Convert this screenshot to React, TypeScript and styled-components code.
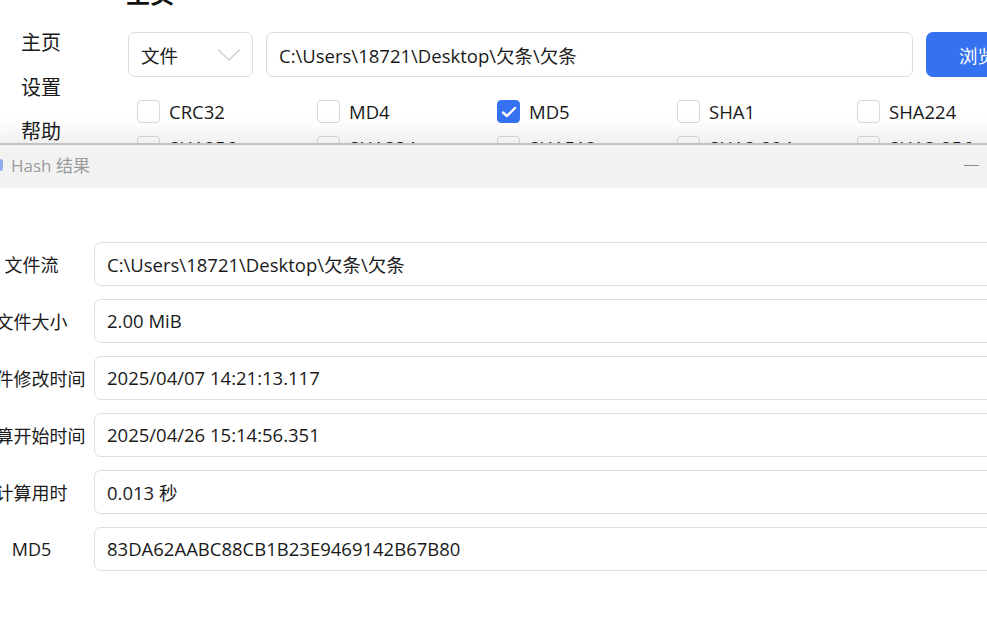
import React from "react";
import styled, { createGlobalStyle } from "styled-components";

const Global = createGlobalStyle`
  html, body { margin: 0; padding: 0; background: #fff; }
  body { font-family: "Segoe UI", "Open Sans", "Noto Sans CJK SC", sans-serif; color: #1a1a1a; }
  * { box-sizing: border-box; }
`;

const Desktop = styled.div`
  position: relative;
  width: 987px;
  height: 617px;
  overflow: hidden;
  background: #fff;
`;

const MainWindow = styled.div`
  position: absolute;
  left: 0;
  top: -22px;
  width: 1100px;
  height: 400px;
  display: flex;
  background: #fff;
`;

const Sidebar = styled.nav`
  width: 128px;
  padding: 43px 0 0 22px;
  display: flex;
  flex-direction: column;
`;

const NavItem = styled.div`
  height: 44.5px;
  line-height: 44.5px;
  font-size: 20px;
  color: #1a1a1a;
  margin-left: -1px;
`;

const Content = styled.div`
  flex: 1;
  display: flex;
  flex-direction: column;
`;

const Heading = styled.h1`
  margin: 0 0 0 -2px;
  height: 32px;
  line-height: 32px;
  font-size: 24px;
  font-weight: 700;
  color: #111;
`;

const Toolbar = styled.div`
  display: flex;
  gap: 13px;
  height: 45px;
  margin-top: 22px;
`;

const Select = styled.div`
  width: 125px;
  height: 45px;
  border: 1px solid #dcdcdc;
  border-radius: 7px;
  display: flex;
  align-items: center;
  justify-content: space-between;
  padding: 0 11px 0 12px;
  font-size: 18.5px;
`;

const PathInput = styled.div`
  width: 647px;
  height: 45px;
  border: 1px solid #dcdcdc;
  border-radius: 7px;
  display: flex;
  align-items: center;
  padding-left: 12px;
  font-size: 18.5px;
`;

const BrowseButton = styled.div`
  width: 110px;
  height: 45px;
  border-radius: 7px;
  background: #3572f0;
  color: #fff;
  font-size: 18.5px;
  display: flex;
  align-items: center;
  padding-left: 33px;
`;

const CheckGrid = styled.div`
  display: grid;
  grid-template-columns: repeat(5, 180px);
  row-gap: 13px;
  margin-top: 23px;
  padding-left: 9px;
`;

const CheckItem = styled.label`
  display: flex;
  align-items: center;
  gap: 9px;
  height: 23px;
  font-size: 18.5px;
`;

const Box = styled.span<{ $checked?: boolean }>`
  width: 23px;
  height: 23px;
  border-radius: 4px;
  border: 1px solid ${(p) => (p.$checked ? "#3572f0" : "#d8d8d8")};
  background: ${(p) => (p.$checked ? "#3572f0" : "#fff")};
  display: flex;
  align-items: center;
  justify-content: center;
`;

const Dialog = styled.div`
  position: absolute;
  left: -20px;
  top: 143px;
  width: 1100px;
  height: 500px;
  background: #fff;
  border-top: 2px solid #c2c2c2;
  box-shadow: 0 -6px 22px rgba(0, 0, 0, 0.09);
  display: flex;
  flex-direction: column;
`;

const TitleBar = styled.div`
  height: 43px;
  background: #f2f2f2;
  display: flex;
  align-items: center;
  padding-left: 7px;
  padding-bottom: 4px;
  gap: 8px;
  position: relative;
`;

const TitleText = styled.span`
  font-size: 17px;
  color: #9a9a9a;
`;

const Minimize = styled.span`
  position: absolute;
  left: 984px;
  top: 20px;
  width: 15px;
  height: 1px;
  background: #8a8a8a;
`;

const Body = styled.div`
  padding-top: 54px;
  display: flex;
  flex-direction: column;
  gap: 13px;
`;

const Row = styled.div`
  display: flex;
  align-items: center;
  gap: 11px;
`;

const Label = styled.div`
  width: 103px;
  font-size: 18px;
  white-space: nowrap;
  display: flex;
  justify-content: center;
`;

const Field = styled.div`
  width: 950px;
  height: 44px;
  border: 1px solid #dedede;
  border-radius: 7px;
  display: flex;
  align-items: center;
  padding: 0 0 1px 12px;
  font-size: 18.5px;
`;

const Chevron = () => (
  <svg width="24" height="14" viewBox="0 0 24 14">
    <path d="M1 1.5 L12 12 L23 1.5" fill="none" stroke="#d0d0d0" strokeWidth="1.5" />
  </svg>
);

const Check = () => (
  <svg width="16" height="14" viewBox="0 0 16 14">
    <path d="M2 7.5 L6 11 L14 3" fill="none" stroke="#fff" strokeWidth="2.4" strokeLinecap="round" strokeLinejoin="round" />
  </svg>
);

const AppIcon = () => (
  <svg width="16" height="16" viewBox="0 0 16 16">
    <rect x="0" y="2" width="16" height="12" rx="3" fill="#8fb0ef" />
  </svg>
);

const algos = [
  "CRC32", "MD4", "MD5", "SHA1", "SHA224",
  "SHA256", "SHA384", "SHA512", "SHA3-224", "SHA3-256",
];

const path = "C:\\Users\\18721\\Desktop\\欠条\\欠条";

const results: [string, string][] = [
  ["文件流", path],
  ["文件大小", "2.00 MiB"],
  ["文件修改时间", "2025/04/07 14:21:13.117"],
  ["计算开始时间", "2025/04/26 15:14:56.351"],
  ["计算用时", "0.013 秒"],
  ["MD5", "83DA62AABC88CB1B23E9469142B67B80"],
];

export default function App() {
  return (
    <>
      <Global />
      <Desktop>
        <MainWindow>
          <Sidebar>
            <NavItem>主页</NavItem>
            <NavItem>设置</NavItem>
            <NavItem>帮助</NavItem>
          </Sidebar>
          <Content>
            <Heading>主页</Heading>
            <Toolbar>
              <Select>
                <span>文件</span>
                <Chevron />
              </Select>
              <PathInput>{path}</PathInput>
              <BrowseButton>浏览</BrowseButton>
            </Toolbar>
            <CheckGrid>
              {algos.map((a) => (
                <CheckItem key={a}>
                  <Box $checked={a === "MD5"}>{a === "MD5" && <Check />}</Box>
                  {a}
                </CheckItem>
              ))}
            </CheckGrid>
          </Content>
        </MainWindow>
        <Dialog>
          <TitleBar>
            <AppIcon />
            <TitleText>Hash 结果</TitleText>
            <Minimize />
          </TitleBar>
          <Body>
            {results.map(([k, v]) => (
              <Row key={k}>
                <Label>{k}</Label>
                <Field>{v}</Field>
              </Row>
            ))}
          </Body>
        </Dialog>
      </Desktop>
    </>
  );
}
